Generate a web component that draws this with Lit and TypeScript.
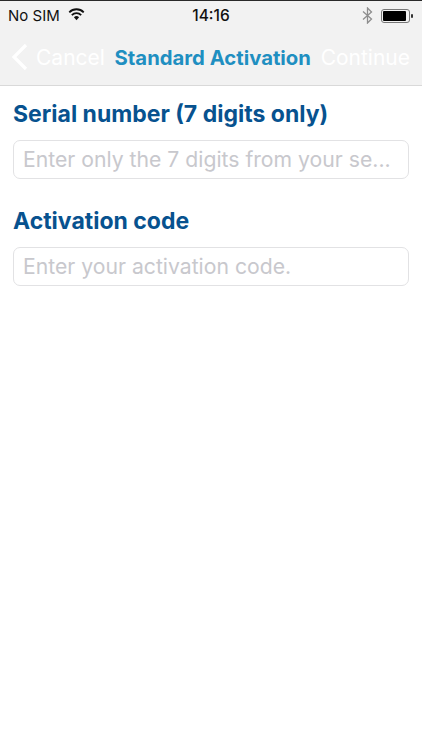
import { LitElement, html, css } from "lit";
import { customElement } from "lit/decorators.js";

@customElement("app-root")
export class AppRoot extends LitElement {
  static styles = css`
    :host {
      display: block;
      width: 422px;
      height: 750px;
      background: #fff;
      font-family: Inter, "Liberation Sans", Arial, sans-serif;
      overflow: hidden;
    }
    .top-line { height: 1px; background: #2a2a2a; }
    .chrome {
      background: #f2f2f2;
      border-bottom: 1px solid #d9d9d9;
      height: 85px;
      box-sizing: border-box;
    }
    .status {
      height: 29px;
      display: grid;
      grid-template-columns: 1fr auto 1fr;
      align-items: center;
      padding: 0 8px;
      font-size: 15px;
      color: #111;
    }
    .left { display: flex; align-items: center; gap: 8px; }
    .wifi { margin-top: -3px; }
    .clock { font-weight: 500; font-size: 15.5px; }
    .right { display: flex; justify-content: flex-end; align-items: center; gap: 8px; padding-right: 1px; }
    .nav {
      height: 54px;
      display: flex;
      align-items: center;
      padding: 0 12px 0 11px;
    }
    .back { display: flex; align-items: center; gap: 8px; color: #fff; font-size: 21px; }
    .title {
      flex: 1;
      text-align: center;
      font-size: 20.3px;
      font-weight: 700;
      color: #1f8fc1;
      white-space: nowrap;
    }
    .cont { color: #fff; font-size: 21px; }
    .form { padding: 13px 13px 0; display: flex; flex-direction: column; }
    .label {
      font-size: 23px;
      line-height: 30px;
      font-weight: 700;
      color: #07528f;
      white-space: nowrap;
    }
    .field {
      margin-top: 11px;
      margin-bottom: 27px;
      height: 39px;
      box-sizing: border-box;
      border: 1px solid #e2e2e4;
      border-radius: 7px;
      padding: 0 9px 2px;
      display: flex;
      align-items: center;
      font-size: 21.2px;
      color: #c8c8cd;
      white-space: nowrap;
      overflow: hidden;
    }
  `;

  render() {
    return html`
      <div class="top-line"></div>
      <div class="chrome">
        <div class="status">
          <div class="left">
            <span>No SIM</span>
            <svg class="wifi" width="17" height="13" viewBox="0 0 16 12">
              <path d="M8 11.5 5.6 8.7a3.4 3.4 0 0 1 4.8 0Z" fill="#111"/>
              <path d="M3.6 6.6a6.2 6.2 0 0 1 8.8 0M1.2 3.9a9.6 9.6 0 0 1 13.6 0" fill="none" stroke="#111" stroke-width="1.7"/>
            </svg>
          </div>
          <div class="clock">14:16</div>
          <div class="right">
            <svg width="11" height="17" viewBox="0 0 11 17">
              <path d="M1 4.5 9.5 12 5.5 16V1L9.5 5 1 12.5" fill="none" stroke="#8e8e8e" stroke-width="1.3"/>
            </svg>
            <svg width="32" height="14" viewBox="0 0 32 14">
              <rect x="0.5" y="0.5" width="28" height="13" rx="2.5" fill="none" stroke="#777"/>
              <rect x="2" y="2" width="23" height="10" rx="1" fill="#000"/>
              <rect x="30" y="5" width="2" height="4" rx="1" fill="#333"/>
            </svg>
          </div>
        </div>
        <div class="nav">
          <div class="back">
            <svg width="17" height="28" viewBox="0 0 17 28">
              <path d="M15 2 3 14l12 12" fill="none" stroke="#fff" stroke-width="3.2"/>
            </svg>
            <span>Cancel</span>
          </div>
          <div class="title">Standard Activation</div>
          <div class="cont">Continue</div>
        </div>
      </div>
      <div class="form">
        <div class="label">Serial number (7 digits only)</div>
        <div class="field">Enter only the 7 digits from your se...</div>
        <div class="label">Activation code</div>
        <div class="field">Enter your activation code.</div>
      </div>
    `;
  }
}
